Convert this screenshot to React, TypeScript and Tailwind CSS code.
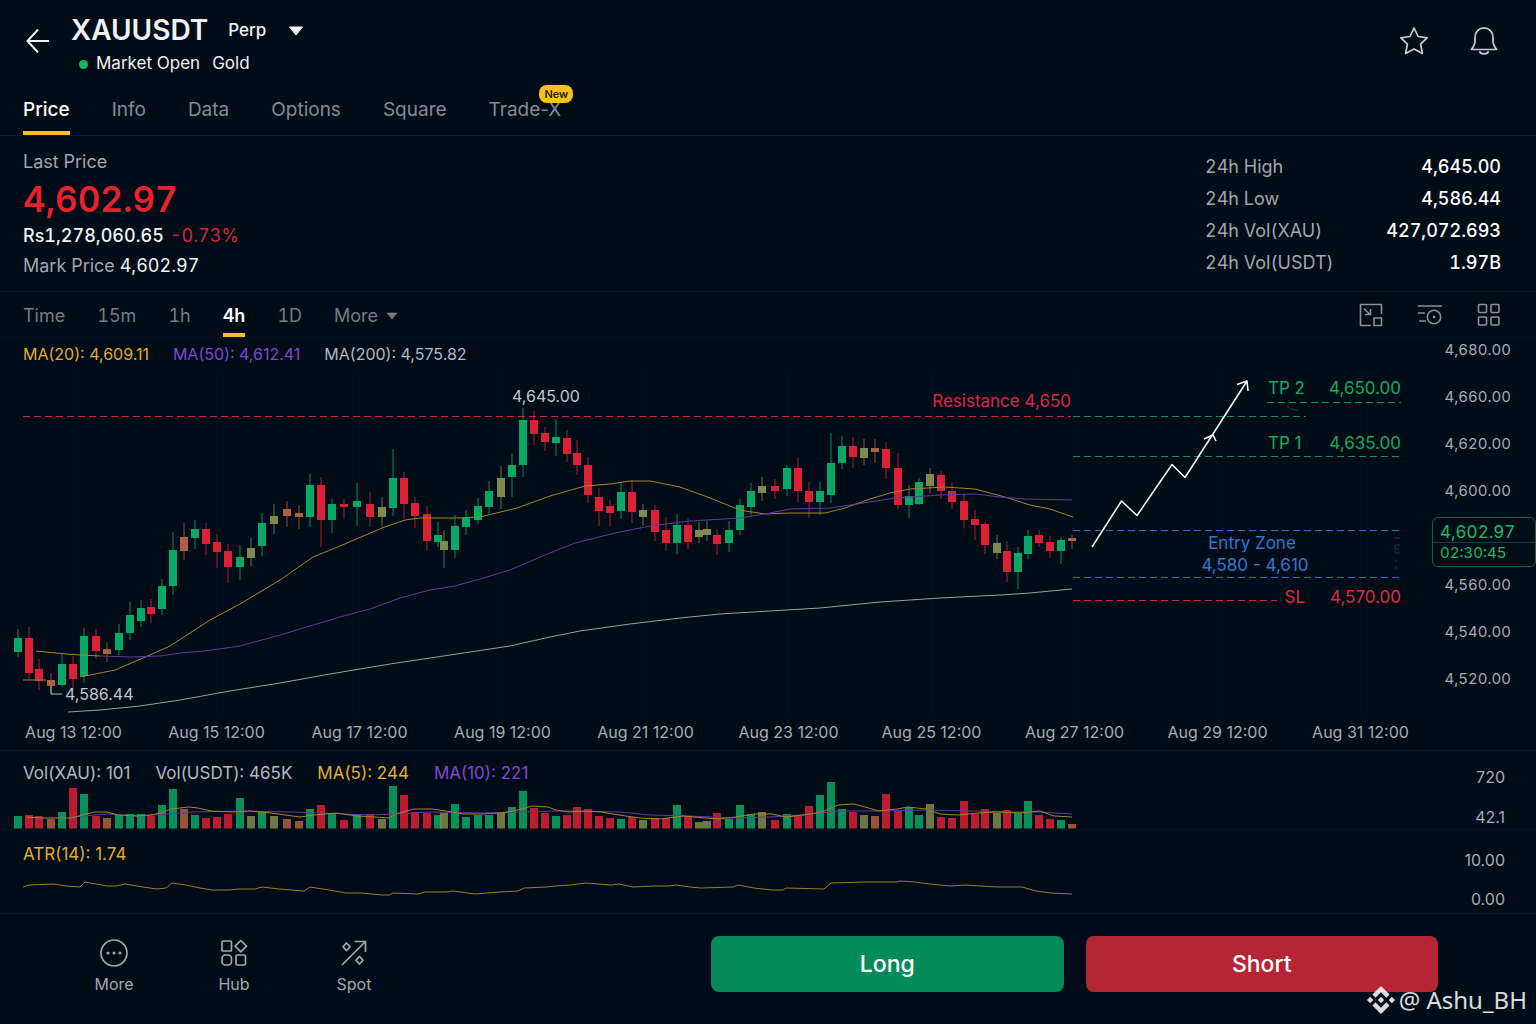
import { useState } from "react";
import { SiBinance } from "react-icons/si";
import clsx from "clsx";

type Tone = "up" | "down" | "olive" | "amber";

// x, high, body top, body bottom, low, volume, tone
type Candle = [number, number, number, number, number, number, Tone];

const tabs = ["Price", "Info", "Data", "Options", "Square", "Trade-X"];

const intervals = ["Time", "15m", "1h", "4h", "1D"];

const stats = [
  { label: "24h High", value: "4,645.00" },
  { label: "24h Low", value: "4,586.44" },
  { label: "24h Vol(XAU)", value: "427,072.693" },
  { label: "24h Vol(USDT)", value: "1.97B" },
];

const dates = [
  "Aug 13 12:00",
  "Aug 15 12:00",
  "Aug 17 12:00",
  "Aug 19 12:00",
  "Aug 21 12:00",
  "Aug 23 12:00",
  "Aug 25 12:00",
  "Aug 27 12:00",
  "Aug 29 12:00",
  "Aug 31 12:00",
];

const upperPrices = ["4,680.00", "4,660.00", "4,620.00", "4,600.00"];
const lowerPrices = ["4,560.00", "4,540.00", "4,520.00"];

const toneFill: Record<Tone, string> = {
  up: "fill-[#0aa866]",
  down: "fill-[#dc2036]",
  olive: "fill-[#7f8a50]",
  amber: "fill-[#b0603c]",
};

const candles: Candle[] = [
  [18, 629, 638, 652, 657, 12, "up"],
  [29, 627, 638, 673, 680, 13, "down"],
  [39, 659, 669, 681, 690, 12, "down"],
  [51, 673, 680, 686, 694, 9, "amber"],
  [62, 653, 664, 685, 687, 16, "up"],
  [73, 656, 664, 679, 690, 40, "down"],
  [84, 628, 636, 676, 683, 34, "up"],
  [96, 629, 636, 651, 659, 12, "down"],
  [107, 642, 649, 654, 662, 10, "amber"],
  [119, 624, 633, 650, 655, 13, "up"],
  [130, 602, 615, 633, 640, 14, "up"],
  [141, 600, 608, 621, 627, 14, "up"],
  [151, 599, 607, 614, 623, 12, "down"],
  [162, 579, 586, 609, 615, 23, "up"],
  [173, 532, 550, 586, 595, 39, "up"],
  [184, 523, 537, 551, 560, 19, "amber"],
  [195, 520, 529, 538, 549, 13, "up"],
  [206, 523, 529, 544, 555, 10, "down"],
  [217, 534, 542, 552, 568, 11, "down"],
  [228, 544, 551, 567, 583, 14, "down"],
  [240, 545, 557, 567, 580, 30, "up"],
  [251, 538, 548, 558, 566, 12, "olive"],
  [262, 513, 523, 546, 556, 16, "up"],
  [274, 504, 516, 524, 534, 12, "olive"],
  [287, 501, 509, 516, 527, 9, "amber"],
  [299, 505, 513, 517, 529, 7, "amber"],
  [310, 474, 485, 517, 527, 19, "up"],
  [321, 477, 485, 520, 547, 23, "down"],
  [332, 499, 504, 520, 533, 15, "up"],
  [344, 499, 504, 507, 519, 8, "down"],
  [357, 483, 501, 507, 526, 14, "up"],
  [370, 492, 504, 517, 527, 14, "down"],
  [382, 497, 507, 517, 527, 9, "olive"],
  [393, 449, 478, 508, 516, 42, "up"],
  [404, 472, 478, 504, 519, 33, "down"],
  [415, 497, 503, 516, 528, 16, "down"],
  [427, 506, 514, 541, 551, 15, "down"],
  [438, 522, 535, 542, 547, 13, "up"],
  [444, 530, 541, 550, 568, 15, "olive"],
  [455, 515, 526, 550, 558, 24, "up"],
  [466, 510, 518, 527, 535, 11, "up"],
  [478, 498, 506, 520, 524, 13, "up"],
  [489, 481, 491, 507, 514, 13, "up"],
  [501, 466, 478, 497, 509, 15, "olive"],
  [512, 454, 465, 477, 497, 21, "up"],
  [523, 408, 420, 465, 477, 37, "up"],
  [534, 411, 420, 434, 445, 20, "down"],
  [545, 427, 433, 442, 451, 15, "down"],
  [556, 419, 437, 443, 456, 12, "up"],
  [567, 430, 438, 454, 462, 13, "down"],
  [577, 440, 453, 465, 475, 21, "down"],
  [588, 457, 465, 495, 503, 19, "down"],
  [599, 488, 497, 511, 526, 12, "down"],
  [610, 500, 506, 513, 526, 10, "down"],
  [621, 482, 492, 511, 519, 9, "up"],
  [632, 480, 492, 512, 523, 11, "down"],
  [643, 504, 510, 517, 526, 8, "olive"],
  [655, 505, 510, 532, 541, 10, "down"],
  [666, 517, 530, 543, 551, 10, "down"],
  [677, 514, 525, 543, 554, 23, "up"],
  [688, 518, 525, 542, 549, 12, "down"],
  [699, 522, 530, 537, 543, 6, "olive"],
  [707, 521, 529, 535, 541, 7, "olive"],
  [717, 529, 535, 544, 555, 15, "down"],
  [729, 521, 530, 543, 552, 9, "up"],
  [740, 499, 505, 530, 535, 23, "up"],
  [751, 483, 491, 507, 516, 14, "up"],
  [762, 477, 486, 493, 501, 16, "olive"],
  [775, 479, 486, 491, 499, 8, "down"],
  [787, 465, 468, 489, 496, 14, "up"],
  [798, 458, 468, 491, 502, 13, "down"],
  [809, 482, 491, 502, 518, 22, "down"],
  [820, 482, 491, 502, 515, 33, "up"],
  [831, 433, 463, 495, 503, 46, "up"],
  [842, 436, 446, 463, 469, 19, "up"],
  [853, 437, 446, 457, 468, 16, "down"],
  [864, 439, 448, 458, 465, 13, "olive"],
  [875, 439, 448, 452, 463, 12, "amber"],
  [886, 442, 449, 468, 479, 34, "down"],
  [898, 453, 468, 505, 509, 17, "down"],
  [909, 485, 496, 505, 518, 21, "up"],
  [919, 478, 482, 504, 505, 13, "up"],
  [930, 468, 474, 486, 493, 24, "olive"],
  [941, 471, 475, 491, 499, 11, "down"],
  [952, 483, 491, 502, 509, 10, "down"],
  [964, 494, 501, 520, 528, 27, "down"],
  [975, 510, 519, 525, 540, 14, "down"],
  [985, 522, 524, 545, 554, 19, "down"],
  [997, 535, 543, 553, 559, 15, "olive"],
  [1007, 541, 551, 572, 582, 18, "down"],
  [1018, 547, 553, 572, 589, 15, "up"],
  [1028, 530, 536, 554, 559, 27, "up"],
  [1039, 530, 535, 543, 547, 13, "down"],
  [1050, 536, 542, 551, 558, 9, "down"],
  [1061, 537, 540, 551, 564, 8, "up"],
  [1072, 535, 538, 541, 549, 4, "amber"],
];

const ma20 =
  "80,677 115,670 150,655 170,646 210,620 240,604 280,580 313,557 340,546 382,528 405,520 420,518 455,518 480,517 517,508 550,496 585,486 610,484 630,481 650,481 680,487 710,498 735,508 745,511 765,514 790,513 825,513 845,508 870,499 890,493 910,489 945,487 975,489 1005,497 1030,505 1050,509 1073,517";
const ma50 =
  "100,656 130,657 160,656 180,653 205,651 240,646 280,635 310,626 340,617 370,609 400,598 430,590 455,586 480,579 510,570 545,555 575,543 615,533 650,526 690,521 740,518 765,514 790,509 830,508 870,502 895,498 940,495 975,494 1000,497 1025,499 1072,500";
const ma200 =
  "68,712 100,710 140,706 180,700 230,691 280,683 330,674 390,664 450,655 510,646 550,637 580,631 630,624 680,618 720,614 770,611 820,608 880,602 940,598 1000,595 1030,593 1072,589";
const volMa5 =
  "27,817 40,818 71,818 86,814 95,812 107,812 118,815 136,816 150,815 161,813 171,809 189,807 198,808 211,811 232,812 250,811 271,813 300,817 314,815 336,813 357,816 375,817 389,818 396,814 414,809 432,809 446,811 464,814 482,814 500,813 514,811 532,806 548,807 556,810 569,812 586,811 601,812 619,815 640,818 661,819 683,816 694,817 719,819 736,817 754,814 772,814 786,817 804,815 822,812 838,805 854,804 865,807 879,811 897,809 908,807 926,809 940,814 958,815 979,813 997,812 1019,813 1040,811 1054,816 1072,817";
const volMa10 =
  "71,817 107,814 140,816 170,814 190,812 240,811 290,812 320,813 370,815 395,814 430,812 480,813 520,812 556,811 580,811 620,812 650,815 690,816 730,818 770,817 800,815 840,811 880,811 930,810 970,811 1010,812 1040,812 1072,814";
const atr =
  "23,887 29,885 54,884 66,886 80,887 85,882 107,886 116,886 125,884 143,887 157,889 166,888 172,883 186,885 200,888 212,890 229,890 239,889 255,889 262,887 279,889 304,891 310,887 329,890 346,893 361,893 382,895 389,895 393,893 418,894 425,892 446,892 453,891 475,894 500,892 518,891 524,888 546,887 556,886 570,885 586,883 611,885 619,884 633,887 654,886 669,886 676,885 690,887 701,888 733,887 738,885 754,888 772,890 783,890 786,888 824,889 831,883 865,882 897,882 900,881 915,882 929,884 951,886 965,885 997,887 1022,887 1036,891 1051,893 1072,894";

function BackIcon() {
  return (
    <svg className="size-6" viewBox="0 0 24 24" fill="none" stroke="currentColor" strokeWidth="2">
      <path d="M12 .5 1.500 12 12 23.500M1.500 12h21.500" strokeLinejoin="round" />
    </svg>
  );
}

function StarIcon() {
  return (
    <svg className="size-7" viewBox="0 0 28 28" fill="none" stroke="currentColor" strokeWidth="1.7" strokeLinejoin="round">
      <path d="m14 1 4.1 8.5 9 1.3-6.5 6.4 1.8 9.3L14 22.1l-8.4 4.4 1.8-9.3L.9 10.8l9-1.3z" />
    </svg>
  );
}

function BellIcon() {
  return (
    <svg className="size-7" viewBox="0 0 28 28" fill="none" stroke="currentColor" strokeWidth="1.7" strokeLinejoin="round">
      <path d="M14 .9a9 9 0 0 0-9 9v4.3c0 2.6-.9 4.6-3.6 8.3h25.2c-2.7-3.7-3.6-5.7-3.6-8.3V9.900a9 9 0 0 0-9-9z" />
      <path d="M9.500 24.200a4.600 3.300 0 0 0 9 0" />
    </svg>
  );
}

function Caret({ className }: { className?: string }) {
  return (
    <svg className={className} viewBox="0 0 16 10" fill="currentColor" stroke="currentColor" strokeLinejoin="round">
      <path d="M1.500 1h13L8 9z" />
    </svg>
  );
}

function LayoutIcon() {
  return (
    <svg className="size-6" viewBox="0 0 24 24" fill="none" stroke="currentColor" strokeWidth="1.6">
      <path d="M12 22.500H1.500v-21h21V11" />
      <path d="M15 15h7.500v7.500H15zM5 5.500l6 6M11.500 6v5.500H6" />
    </svg>
  );
}

function IndicatorIcon() {
  return (
    <svg className="size-6" viewBox="0 0 24 24" fill="none" stroke="currentColor" strokeWidth="1.6">
      <path d="M0 3h24M0 10h7M1 18h7" />
      <circle cx="16" cy="14" r="6.700" />
      <circle cx="16" cy="14" r="1.300" fill="currentColor" stroke="none" />
    </svg>
  );
}

function GridIcon() {
  return (
    <svg className="size-6" viewBox="0 0 24 24" fill="none" stroke="currentColor" strokeWidth="1.600">
      <rect x="1.500" y="1.500" width="8" height="8" rx="1" />
      <rect x="14" y="1.500" width="8" height="8" rx="1" />
      <rect x="1.500" y="14" width="8" height="8" rx="1" />
      <rect x="14" y="14" width="8" height="8" rx="1" />
    </svg>
  );
}

function MoreIcon() {
  return (
    <svg className="size-7" viewBox="0 0 28 28" fill="none" stroke="currentColor" strokeWidth="1.700">
      <circle cx="14" cy="14" r="13" />
      <g fill="currentColor" stroke="none">
        <circle cx="8" cy="14" r="1.500" />
        <circle cx="14" cy="14" r="1.500" />
        <circle cx="20" cy="14" r="1.500" />
      </g>
    </svg>
  );
}

function HubIcon() {
  return (
    <svg className="size-7" viewBox="0 0 28 28" fill="none" stroke="currentColor" strokeWidth="1.700" strokeLinejoin="round">
      <rect x="2" y="2" width="9.500" height="10" rx="1" />
      <path d="m20.800 1.500 5.700 5.700-5.700 5.700-5.700-5.700z" />
      <rect x="2" y="16" width="9.500" height="10" rx="3.500" />
      <rect x="16" y="16" width="9.500" height="10" rx="1.500" />
    </svg>
  );
}

function SpotIcon() {
  return (
    <svg className="size-7" viewBox="0 0 28 28" fill="none" stroke="currentColor" strokeWidth="1.700">
      <path d="M2 26 25.500 2.500M14.500 2.500h11V13" />
      <path d="m6.500 4 3.500 3.800-3.500 3.800L3 7.800zM19.500 17.500l3.500 3.800-3.500 3.800-3.500-3.800z" />
    </svg>
  );
}

const shortcuts = [
  { label: "More", icon: MoreIcon },
  { label: "Hub", icon: HubIcon },
  { label: "Spot", icon: SpotIcon },
];

function PriceChart() {
  return (
    <svg className="block h-auto w-full text-[16px]" viewBox="0 370 1432 348" fill="none">
      <g className="stroke-white/[0.015]">
        {dates.map((date, i) => (
          <path key={date} d={`M${73 + i * 143}.5 370V718`} />
        ))}
      </g>

      {/* support / resistance and targets */}
      <g strokeDasharray="7 4">
        <path className="stroke-[#c42c40]" d="M23 416.500H1071" />
        <path className="stroke-[#1d8d52]" d="M1073 416.500H1306M1073 456.500H1401M1267 402.500H1401" />
        <path className="stroke-[#2672c2]" d="M1073 530.500H1401M1073 577.500H1401" />
        <path className="stroke-[#cf2a3f]" d="M1073 600.500H1277" />
      </g>
      <path className="stroke-[#1b7a4b]/60" d="m1287 406 4 3 7 1.500" />
      <path className="stroke-[#1f4f9a]/60" d="M1394 538h6M1395 545v8h5M1395 545h5M1395 549h4M1396 560v2M1395 568h3" />

      {candles.map(([x, high, top, bottom, low, , tone]) => (
        <g key={x} className={toneFill[tone]}>
          <rect x={x - 0.5} y={high} width="1" height={low - high} opacity="0.8" />
          <rect x={x - 4} y={top} width="8" height={bottom - top} />
        </g>
      ))}

      <path className="stroke-[#a8842a]" d="M23 680H46" />
      <path className="stroke-[#a8842a]" d="M36 651Q70 655 100 656" />
      <polyline className="stroke-[#a8842a]" points={ma20} strokeLinejoin="round" />
      <polyline className="stroke-[#613a9c]" points={ma50} strokeLinejoin="round" />
      <polyline className="stroke-[#9b9ca6]" points={ma200} strokeLinejoin="round" />

      <path className="stroke-[#b9bcc4]" d="M51 686V694H62" />
      <text className="fill-[#c3c7cf]" x="65" y="700">4,586.44</text>
      <text className="fill-[#c3c7cf]" x="546" y="402" textAnchor="middle">4,645.00</text>

      <text className="fill-[#df2840] text-[17px]" x="1071" y="407" textAnchor="end">Resistance 4,650</text>
      <g className="text-[17px]">
        <g className="fill-[#17a95c]">
          <text x="1268" y="394">TP 2</text>
          <text x="1401" y="394" textAnchor="end">4,650.00</text>
          <text x="1268" y="449">TP 1</text>
          <text x="1401" y="449" textAnchor="end">4,635.00</text>
        </g>
        <g className="fill-[#3478cf]">
          <text x="1252" y="549" textAnchor="middle">Entry Zone</text>
          <text x="1255" y="571" textAnchor="middle">4,580 - 4,610</text>
        </g>
        <g className="fill-[#df2840]">
          <text x="1305" y="603" textAnchor="end">SL</text>
          <text x="1401" y="603" textAnchor="end">4,570.00</text>
        </g>
      </g>

      <g className="stroke-white" strokeWidth="1.500" strokeLinejoin="round">
        <path d="M1092 547 1121.500 501 1137 515.500 1172 464.500 1185 477.500 1247 381" />
        <path d="M1237 384.500 1247 381 1248 391M1204 439 1213 435 1216 441" />
      </g>
    </svg>
  );
}

function VolumeChart() {
  return (
    <svg className="block h-auto w-full" viewBox="0 782 1432 47" fill="none">
      {candles.map(([x, , , , , volume, tone]) => (
        <rect
          key={x}
          className={toneFill[tone]}
          x={x - 4}
          y={828 - volume}
          width="8"
          height={volume + 0.5}
          opacity="0.85"
        />
      ))}
      <polyline className="stroke-[#613a9c]" points={volMa10} />
      <polyline className="stroke-[#a8842a]" points={volMa5} />
    </svg>
  );
}

function AtrChart() {
  return (
    <svg className="block h-auto w-full" viewBox="0 870 1432 43" fill="none">
      <polyline className="stroke-[#a07c28]" points={atr} strokeLinejoin="round" />
    </svg>
  );
}

export default function App() {
  const [tab, setTab] = useState("Price");
  const [interval, setInterval] = useState("4h");

  return (
    <div className="relative min-h-screen overflow-hidden bg-[#000c18] font-['Inter',sans-serif] text-[#f1f2f4]">
      <header className="flex items-center justify-between pt-1 pr-[38px] pl-[26px]">
        <div className="flex items-center gap-[21px]">
          <button type="button" aria-label="Back">
            <BackIcon />
          </button>
          <div className="pt-2">
            <div className="flex h-9 items-center">
              <h1 className="text-[28px] font-semibold">XAUUSDT</h1>
              <button type="button" className="ml-5 flex items-center gap-[22px] pt-0.5 text-[17px] font-medium">
                Perp
                <Caret className="h-2.5 w-4" />
              </button>
            </div>
            <div className="flex h-[30px] items-center pt-0.5 pl-2 text-[17px]">
              <span className="mr-2 size-[9px] rounded-full bg-[#12b76a]" />
              <span className="mr-3">Market Open</span>
              <span>Gold</span>
            </div>
          </div>
        </div>
        <div className="flex gap-[42px] text-[#c9cdd4]">
          <button type="button" aria-label="Add to favourites">
            <StarIcon />
          </button>
          <button type="button" aria-label="Alerts">
            <BellIcon />
          </button>
        </div>
      </header>

      <nav className="mt-1.5 flex h-[52px] gap-[42px] border-b border-[#0e1b27] px-[23px] text-[19px]">
        {tabs.map((name) => (
          <button
            key={name}
            type="button"
            onClick={() => setTab(name)}
            className={clsx(
              "relative border-b-4 pt-1.5",
              tab === name ? "border-[#f5c02c] font-medium text-white" : "border-transparent text-[#858a93]"
            )}
          >
            {name}
            {name === "Trade-X" && (
              <span className="absolute top-px -right-3 flex h-[18px] items-center rounded-lg bg-[#f7c31b] px-[5px] text-[11px] font-semibold text-[#2a2205]">
                New
              </span>
            )}
          </button>
        ))}
      </nav>

      <section className="flex justify-between border-b border-[#0b1723] pt-3 pr-[35px] pb-[9px] pl-[23px] tabular-nums">
        <div className="text-[18px]">
          <p className="h-7 leading-7 text-[#a2a6ae]">Last Price</p>
          <p className="h-[46px] text-[35px] leading-[46px] font-semibold text-[#e8202f]">4,602.97</p>
          <p className="h-7 leading-7">
            <span className="font-medium">Rs1,278,060.65</span>
            <span className="ml-1.5 text-[#d3283a]">-0.73%</span>
          </p>
          <p className="h-8 leading-8">
            <span className="text-[#a2a6ae]">Mark Price</span> 4,602.97
          </p>
        </div>
        <dl className="w-[296px] pt-[3px] text-[18px] leading-8">
          {stats.map((stat) => (
            <div key={stat.label} className="flex justify-between">
              <dt className="text-[#a2a6ae]">{stat.label}</dt>
              <dd className="font-medium text-white">{stat.value}</dd>
            </div>
          ))}
        </dl>
      </section>

      <div className="flex h-[46px] items-stretch justify-between border-b border-[#08131f] pr-[35px] pl-[23px] text-[18px] text-[#767b85] tabular-nums">
        <div className="flex gap-8">
          {intervals.map((name) => (
            <button
              key={name}
              type="button"
              onClick={() => setInterval(name)}
              className={clsx(
                "border-b-4 pt-1.5",
                interval === name ? "border-[#f5c02c] font-semibold text-white" : "border-transparent"
              )}
            >
              {name}
            </button>
          ))}
          <button type="button" className="flex items-center gap-2 pt-0.5">
            More
            <Caret className="h-2 w-3" />
          </button>
        </div>
        <div className="flex items-center gap-[35px] text-[#8b909a]">
          <button type="button" aria-label="Layout">
            <LayoutIcon />
          </button>
          <button type="button" aria-label="Indicators">
            <IndicatorIcon />
          </button>
          <button type="button" aria-label="Split view">
            <GridIcon />
          </button>
        </div>
      </div>

      <section className="grid grid-cols-[minmax(0,1fr)_104px] border-b border-[#0e1b27]">
        <div className="pt-1.5 pb-2">
          <div className="mb-1.5 flex h-5 gap-6 pl-[23px] text-[16px] leading-5">
            <span className="text-[#e0ad2c]">MA(20): 4,609.11</span>
            <span className="text-[#8347cf]">MA(50): 4,612.41</span>
            <span className="text-[#b4b8c0]">MA(200): 4,575.82</span>
          </div>
          <PriceChart />
          <div className="mt-1 grid grid-cols-10 pl-0.5 text-center text-[16px] leading-5 whitespace-nowrap text-[#a7abb4]">
            {dates.map((date) => (
              <span key={date}>{date}</span>
            ))}
          </div>
        </div>
        <div className="pt-0.5 text-[15px] leading-5 text-[#a7abb4] tabular-nums">
          <div className="flex flex-col gap-[27px] pr-[25px] text-right">
            {upperPrices.map((price) => (
              <span key={price}>{price}</span>
            ))}
          </div>
          <div className="mt-4 mb-2 rounded-md border border-[#12633f] text-[#1fb866]">
            <p className="border-b border-[#12633f]/60 pt-1 pl-[7px] text-[17px] leading-5">4,602.97</p>
            <p className="pb-[3px] pl-[7px]">02:30:45</p>
          </div>
          <div className="flex flex-col gap-[27px] pr-[25px] text-right">
            {lowerPrices.map((price) => (
              <span key={price}>{price}</span>
            ))}
          </div>
        </div>
      </section>

      <section className="grid grid-cols-[minmax(0,1fr)_104px] border-b border-[#08131f]">
        <div className="pt-3">
          <div className="flex h-[19px] gap-[25px] pl-[23px] text-[17px] leading-5">
            <span className="text-[#b4b8c0]">Vol(XAU): 101</span>
            <span className="text-[#b4b8c0]">Vol(USDT): 465K</span>
            <span className="text-[#e0ad2c]">MA(5): 244</span>
            <span className="text-[#8347cf]">MA(10): 221</span>
          </div>
          <VolumeChart />
        </div>
        <div className="flex flex-col justify-between pt-4 pr-[31px] pb-0.5 text-right text-[16px] leading-5 text-[#a7abb4]">
          <span>720</span>
          <span>42.1</span>
        </div>
      </section>

      <section className="grid grid-cols-[minmax(0,1fr)_104px] border-b border-[#0e1b27]">
        <div className="pt-3.5">
          <p className="mb-1.5 h-5 pl-[23px] text-[17px] leading-5 text-[#e0ad2c]">ATR(14): 1.74</p>
          <AtrChart />
        </div>
        <div className="flex flex-col justify-between pt-5 pr-[31px] pb-1 text-right text-[16px] leading-5 text-[#a7abb4]">
          <span>10.00</span>
          <span>0.00</span>
        </div>
      </section>

      <footer className="grid grid-cols-[minmax(0,711fr)_minmax(0,727fr)] pt-[22px] pr-[98px] pb-8">
        <nav className="flex pl-[54px] text-[16px] text-[#a2a7b0]">
          {shortcuts.map(({ label, icon: Icon }) => (
            <button key={label} type="button" className="flex w-[120px] flex-col items-center gap-[7px] pt-[3px]">
              <Icon />
              <span className="leading-5">{label}</span>
            </button>
          ))}
        </nav>
        <div className="grid grid-cols-2 gap-[22px] text-[23px] font-medium text-white">
          <button type="button" className="h-14 rounded-lg bg-[#048a5b]">
            Long
          </button>
          <button type="button" className="h-14 rounded-lg bg-[#b42535]">
            Short
          </button>
        </div>
      </footer>

      <div className="absolute right-[9px] bottom-3 flex items-center gap-1 font-['Noto_Sans',sans-serif] text-[24px] leading-7 text-white/85">
        <SiBinance className="size-7" />
        <span>@ Ashu_BH</span>
      </div>
    </div>
  );
}
